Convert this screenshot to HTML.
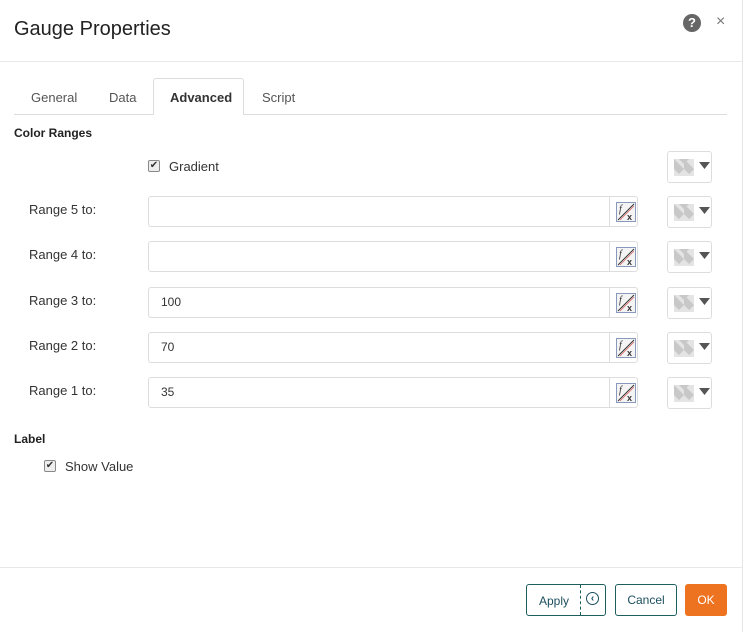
<!DOCTYPE html>
<html><head><style>
body{margin:0;width:745px;height:632px;background:#fff;font-family:"Liberation Sans",sans-serif;position:relative;overflow:hidden;color:#333}
.a{position:absolute}
.inp{position:absolute;left:148px;width:490px;height:31px;border:1px solid #ddd;border-radius:3px;box-sizing:border-box;font-size:12px;line-height:29px;padding-left:12px;color:#333}
.fx{position:absolute;right:0;top:0;width:27px;height:29px;border-left:1px solid #ddd}
.cb{position:absolute;left:667px;width:45px;height:32px;border:1px solid #ddd;border-radius:3px;box-sizing:border-box}
.lbl{position:absolute;left:29px;font-size:13px;color:#333}
.chk{position:absolute;width:10px;height:10px;border:1px solid #888;border-radius:2px;background:#eee;font-size:10px;line-height:10px;text-align:center;color:#333}
</style></head><body>
<div class="a" style="right:2px;top:0;width:1px;height:632px;background:#e5e5e5"></div>
<div class="a" style="left:14px;top:18px;font-size:20px;color:#222">Gauge Properties</div>
<div class="a" style="left:683px;top:14px;width:18px;height:18px;border-radius:50%;background:#666;color:#fff;font-size:13px;font-weight:bold;text-align:center;line-height:18px">?</div>
<div class="a" style="left:716px;top:13px;font-size:16px;color:#777">×</div>
<div class="a" style="left:0;top:61px;width:742px;height:1px;background:#e8e8e8"></div>
<div class="a" style="left:14px;top:114px;width:713px;height:1px;background:#ddd"></div>
<div class="a" style="left:153px;top:78px;width:91px;height:37px;border:1px solid #ddd;border-bottom:none;border-radius:3px 3px 0 0;background:#fff;box-sizing:border-box"></div>
<div class="a" style="left:31px;top:90px;font-size:13px;color:#555">General</div>
<div class="a" style="left:109px;top:90px;font-size:13px;color:#555">Data</div>
<div class="a" style="left:170px;top:90px;font-size:13px;font-weight:bold;color:#333">Advanced</div>
<div class="a" style="left:262px;top:90px;font-size:13px;color:#555">Script</div>
<div class="a" style="left:14px;top:126px;font-size:12px;font-weight:bold;color:#222">Color Ranges</div>
<div class="chk" style="left:148px;top:160px">✔</div>
<div class="a" style="left:169px;top:159px;font-size:13px">Gradient</div>
<div class="cb" style="top:151px"><svg width="45" height="32" class="a" style="left:0;top:0"><rect x="6" y="7" width="20" height="17" fill="#e4e4e4"/><path d="M6 7l5 5-5 5zM16 7l5 5-5 5zM11 12l5 5-5 5-5-5zM21 12l5 5-5 5-5-5zM11 7h10l-5 5z" fill="#c8c8c8"/><path d="M31 10h11l-5.5 7z" fill="#555"/></svg></div>
<div class="lbl" style="top:202px">Range 5 to:</div>
<div class="lbl" style="top:247px">Range 4 to:</div>
<div class="lbl" style="top:293px">Range 3 to:</div>
<div class="lbl" style="top:338px">Range 2 to:</div>
<div class="lbl" style="top:383px">Range 1 to:</div>
<div class="inp" style="top:196px"><div class="fx"></div></div>
<div class="inp" style="top:241px"><div class="fx"></div></div>
<div class="inp" style="top:287px">100<div class="fx"></div></div>
<div class="inp" style="top:332px">70<div class="fx"></div></div>
<div class="inp" style="top:377px">35<div class="fx"></div></div>
<script>
[196,241,287,332,377].forEach(function(t){
document.body.insertAdjacentHTML('beforeend','<svg class="a" style="left:616px;top:'+(t+6)+'px" width="20" height="20"><rect x="0.5" y="0.5" width="19" height="19" fill="#f4f4f4" stroke="#8899bb"/><text x="3" y="10" font-size="10" font-style="italic" font-family="Liberation Serif" fill="#333">f</text><text x="11" y="18" font-size="9" font-weight="bold" font-family="Liberation Sans" fill="#333">x</text><path d="M2 18L18 2" stroke="#333"/><path d="M4 18L18 4" stroke="#d55" stroke-width="0.6"/></svg>');
document.body.insertAdjacentHTML('beforeend','<div class="cb" style="top:'+t+'px"><svg width="45" height="32" class="a" style="left:0;top:0"><rect x="6" y="7" width="20" height="17" fill="#e4e4e4"/><path d="M6 7l5 5-5 5zM16 7l5 5-5 5zM11 12l5 5-5 5-5-5zM21 12l5 5-5 5-5-5zM11 7h10l-5 5z" fill="#c8c8c8"/><path d="M31 10h11l-5.5 7z" fill="#555"/></svg></div>');
});
</script>
<div class="a" style="left:14px;top:432px;font-size:12px;font-weight:bold;color:#222">Label</div>
<div class="chk" style="left:44px;top:460px">✔</div>
<div class="a" style="left:65px;top:459px;font-size:13px">Show Value</div>
<div class="a" style="left:0;top:567px;width:742px;height:1px;background:#e8e8e8"></div>
<div class="a" style="left:526px;top:584px;width:80px;height:32px;border:1px solid #1d5f5f;border-radius:3px;box-sizing:border-box"></div>
<div class="a" style="left:580px;top:585px;height:30px;border-left:1px dashed #1d5f5f"></div>
<div class="a" style="left:539px;top:594px;font-size:12px;color:#1d4f5f">Apply</div>
<div class="a" style="left:586px;top:592px;width:11px;height:11px;border:1.5px solid #1d4f5f;border-radius:50%;font-size:10px;line-height:11px;text-align:center;color:#1d4f5f;font-weight:bold">‹</div>
<div class="a" style="left:615px;top:584px;width:62px;height:32px;border:1px solid #1d5f5f;border-radius:3px;box-sizing:border-box;font-size:12px;color:#1d4f5f;text-align:center;line-height:31px">Cancel</div>
<div class="a" style="left:685px;top:584px;width:42px;height:32px;background:#ee7320;border-radius:3px;font-size:12px;color:#fff;text-align:center;line-height:32px">OK</div>
</body></html>
